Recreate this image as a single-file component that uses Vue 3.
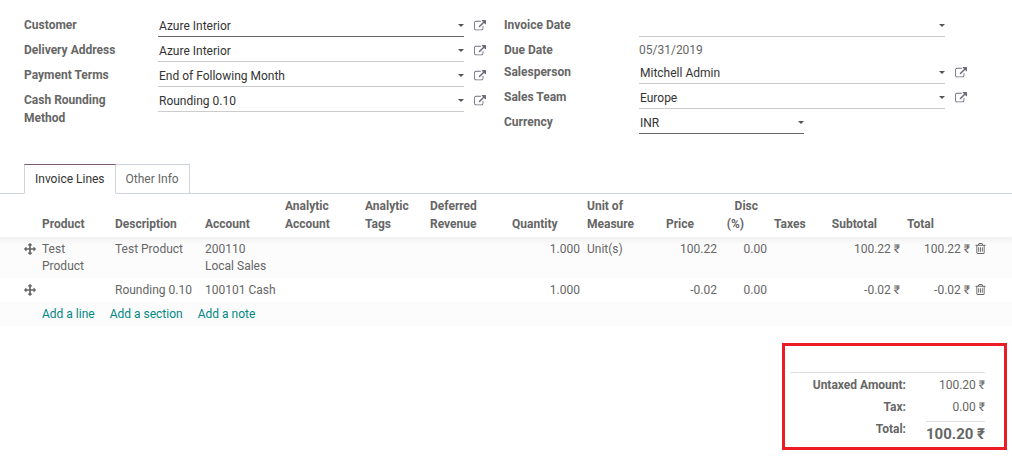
<script setup>
import { ref } from 'vue'

const leftFields = [
  { id: 'customer', label: 'Customer', value: 'Azure Interior', link: true, required: true },
  { id: 'delivery', label: 'Delivery Address', value: 'Azure Interior', link: true },
  { id: 'terms', label: 'Payment Terms', value: 'End of Following Month', link: true },
  { id: 'rounding', label: 'Cash Rounding Method', value: 'Rounding 0.10', link: true },
]
const rightFields = [
  { id: 'date', label: 'Invoice Date', value: '', kind: 'date' },
  { id: 'due', label: 'Due Date', value: '05/31/2019', kind: 'text' },
  { id: 'salesperson', label: 'Salesperson', value: 'Mitchell Admin', link: true },
  { id: 'team', label: 'Sales Team', value: 'Europe', link: true },
  { id: 'currency', label: 'Currency', value: 'INR', required: true, short: true },
]
const groups = [leftFields, rightFields]
const invoiceDate = ref('')
const activeTab = ref('Invoice Lines')
const tabs = ['Invoice Lines', 'Other Info']

const lines = [
  { product: 'Test Product', description: 'Test Product', account: '200110 Local Sales', quantity: '1.000', unit: 'Unit(s)', price: '100.22', disc: '0.00', subtotal: '100.22 ₹', total: '100.22 ₹' },
  { product: '', description: 'Rounding 0.10', account: '100101 Cash', quantity: '1.000', unit: '', price: '-0.02', disc: '0.00', subtotal: '-0.02 ₹', total: '-0.02 ₹' },
]
const columns = ['handle', 'product', 'description', 'account', 'analytic', 'tags', 'deferred', 'quantity', 'unit', 'price', 'disc', 'taxes', 'subtotal', 'total', 'remove']

const linkPath = 'M1408 928v320q0 119-84.5 203.5t-203.5 84.5h-832q-119 0-203.5-84.5t-84.5-203.5v-832q0-119 84.5-203.5t203.5-84.5h704q14 0 23 9t9 23v64q0 14-9 23t-23 9h-704q-66 0-113 47t-47 113v832q0 66 47 113t113 47h832q66 0 113-47t47-113v-320q0-14 9-23t23-9h64q14 0 23 9t9 23zm384-864v512q0 26-19 45t-45 19-45-19l-176-176-652 652q-10 10-23 10t-23-10l-114-114q-10-10-10-23t10-23l652-652-176-176q-19-19-19-45t19-45 45-19h512q26 0 45 19t19 45z'
const movePath = 'M1792 896q0 26-19 45l-256 256q-19 19-45 19t-45-19-19-45v-128h-384v384h128q26 0 45 19t19 45-19 45l-256 256q-19 19-45 19t-45-19l-256-256q-19-19-19-45t19-45 45-19h128v-384h-384v128q0 26-19 45t-45 19-45-19l-256-256q-19-19-19-45t19-45l256-256q19-19 45-19t45 19 19 45v128h384v-384h-128q-26 0-45-19t-19-45 19-45l256-256q19-19 45-19t45 19l256 256q19 19 19 45t-19 45-45 19h-128v384h384v-128q0-26 19-45t45-19 45 19l256 256q19 19 19 45z'
const trashPath = 'M704 736v576q0 14-9 23t-23 9h-64q-14 0-23-9t-9-23v-576q0-14 9-23t23-9h64q14 0 23 9t9 23zm256 0v576q0 14-9 23t-23 9h-64q-14 0-23-9t-9-23v-576q0-14 9-23t23-9h64q14 0 23 9t9 23zm256 0v576q0 14-9 23t-23 9h-64q-14 0-23-9t-9-23v-576q0-14 9-23t23-9h64q14 0 23 9t9 23zm128 724v-948h-896v948q0 22 7 40.5t14.5 27 10.5 8.5h832q3 0 10.5-8.5t14.5-27 7-40.5zm-672-1076h448l-48-117q-7-9-17-11h-317q-10 2-17 11zm928 32v64q0 14-9 23t-23 9h-96v948q0 83-47 143.5t-113 60.5h-832q-66 0-113-58.5t-47-141.5v-952h-96q-14 0-23-9t-9-23v-64q0-14 9-23t23-9h309l70-167q15-37 54-63t79-26h320q40 0 79 26t54 63l70 167h309q14 0 23 9t9 23z'
</script>

<template>
  <main class="invoice">
    <form class="groups" @submit.prevent>
      <div v-for="(fields, g) in groups" :key="g" class="group">
        <div v-for="f in fields" :key="f.id" class="field" :class="{ plain: f.kind === 'text' }">
          <label v-if="f.kind !== 'text'" class="label" :for="f.id">{{ f.label }}</label>
          <span v-else class="label">{{ f.label }}</span>
          <span v-if="f.kind === 'text'" class="static">{{ f.value }}</span>
          <div v-else class="control" :class="{ required: f.required, short: f.short }">
            <input v-if="f.kind === 'date'" :id="f.id" v-model="invoiceDate" type="text">
            <select v-else :id="f.id">
              <option>{{ f.value }}</option>
            </select>
            <svg class="caret" viewBox="0 0 6 3" aria-hidden="true"><path d="M0 0h6L3 3z" /></svg>
          </div>
          <button v-if="f.link" type="button" class="icon-button open" :aria-label="'Open ' + f.label">
            <svg class="icon" viewBox="0 0 1792 1792"><path :d="linkPath" /></svg>
          </button>
        </div>
      </div>
    </form>

    <div class="tabs" role="tablist">
      <button
        v-for="t in tabs" :key="t" type="button" role="tab" class="tab"
        :class="{ active: t === activeTab }" :aria-selected="t === activeTab" @click="activeTab = t"
      >{{ t }}</button>
    </div>

    <table class="lines">
      <colgroup>
        <col v-for="c in columns" :key="c" :class="'col-' + c">
      </colgroup>
      <thead>
        <tr>
          <th></th>
          <th>Product</th>
          <th>Description</th>
          <th>Account</th>
          <th>Analytic Account</th>
          <th>Analytic Tags</th>
          <th>Deferred Revenue</th>
          <th class="num">Quantity</th>
          <th>Unit of Measure</th>
          <th class="num">Price</th>
          <th class="num disc">Disc <span class="percent">(%)</span></th>
          <th>Taxes</th>
          <th class="num">Subtotal</th>
          <th>Total</th>
          <th></th>
        </tr>
      </thead>
      <tbody>
        <tr v-for="(l, i) in lines" :key="i">
          <td class="handle"><svg class="icon" viewBox="0 0 1792 1792"><path :d="movePath" /></svg></td>
          <td>{{ l.product }}</td>
          <td>{{ l.description }}</td>
          <td>{{ l.account }}</td>
          <td></td>
          <td></td>
          <td></td>
          <td class="num">{{ l.quantity }}</td>
          <td>{{ l.unit }}</td>
          <td class="num">{{ l.price }}</td>
          <td class="num">{{ l.disc }}</td>
          <td></td>
          <td class="num">{{ l.subtotal }}</td>
          <td class="num">{{ l.total }}</td>
          <td class="remove">
            <button type="button" class="icon-button" aria-label="Delete line">
              <svg class="icon trash" viewBox="128 128 1536 1536"><path :d="trashPath" /></svg>
            </button>
          </td>
        </tr>
        <tr>
          <td></td>
          <td colspan="14">
            <div class="adders">
              <a href="#">Add a line</a>
              <a href="#">Add a section</a>
              <a href="#">Add a note</a>
            </div>
          </td>
        </tr>
      </tbody>
    </table>

    <section class="summary">
      <dl class="totals">
        <dt>Untaxed Amount:</dt>
        <dd>100.20 ₹</dd>
        <dt>Tax:</dt>
        <dd>0.00 ₹</dd>
        <dt>Total:</dt>
        <dd class="grand">100.20 ₹</dd>
      </dl>
    </section>
  </main>
</template>

<style>
body {
  background: #fff;
}
</style>

<style scoped>
.invoice {
  padding-top: 12px;
  font-family: Roboto, "Noto Sans", sans-serif;
  font-size: 12px;
  line-height: 18px;
  color: #666;
}
button, input, select {
  font: inherit;
  color: inherit;
}
.groups {
  display: grid;
  grid-template-columns: 1fr 1fr;
  padding: 0 28px 0 24px;
}
.field {
  display: grid;
  grid-template-columns: 134px 1fr 40px;
  align-items: start;
  min-height: 25px;
}
.group:last-child .field {
  grid-template-columns: 135px 1fr 39px;
}
.group .field.plain {
  min-height: 21px;
}
.label {
  padding: 4px 24px 0 0;
  font-weight: 700;
}
.static {
  padding-top: 4px;
}
.control {
  position: relative;
  height: 24px;
  border-bottom: 1px solid #ccc;
  color: #333;
}
.control.required {
  border-bottom-color: #666;
}
.control.short {
  width: 165px;
}
.control input,
.control select {
  display: block;
  box-sizing: border-box;
  width: 100%;
  height: 24px;
  padding: 4px 16px 0 1px;
  border: 0;
  background: none;
  appearance: none;
  outline: none;
}
.caret {
  position: absolute;
  right: 0;
  top: 12px;
  width: 6px;
  height: 3px;
  fill: #555;
  pointer-events: none;
}
.icon-button {
  display: block;
  padding: 0;
  border: 0;
  background: none;
}
.open {
  margin: 8px 0 0 10px;
  color: #6c6c80;
}
.icon {
  display: block;
  width: 12px;
  height: 12px;
  fill: currentColor;
}
.icon.trash {
  width: 11px;
  height: 11px;
}
.tabs {
  display: flex;
  margin-top: 30px;
  padding-left: 24px;
  border-bottom: 1px solid #ced4da;
}
.tab {
  height: 30px;
  margin-bottom: -1px;
  padding: 0 10px;
  border: 1px solid #ced4da;
  background: #fff;
}
.tab + .tab {
  border-left: 0;
}
.tab.active {
  border-top-color: #7c5a6f;
  border-bottom-color: #fff;
  color: #333;
}
.lines {
  width: 100%;
  table-layout: fixed;
  border-collapse: collapse;
}
.col-handle { width: 38px; }
.col-product { width: 73px; }
.col-description { width: 90px; }
.col-account { width: 80px; }
.col-analytic { width: 80px; }
.col-tags { width: 65px; }
.col-deferred { width: 82px; }
.col-quantity { width: 75px; }
.col-unit { width: 78px; }
.col-price { width: 59px; }
.col-disc { width: 50px; }
.col-taxes { width: 53px; }
.col-subtotal { width: 80px; }
.col-total { width: 70px; }
.lines th {
  padding: 3px 4px 4px;
  text-align: left;
  vertical-align: bottom;
}
.lines td {
  padding: 4px 4px 3px;
  line-height: 17px;
  vertical-align: top;
}
.lines .num {
  padding-right: 3px;
  text-align: right;
}
.lines th.num {
  padding-right: 26px;
}
.lines th.disc {
  padding-right: 12px;
  padding-left: 0;
}
.percent {
  margin-right: 14px;
}
.lines tbody tr:nth-child(odd) {
  background: #fcfcfc;
}
.lines tbody tr:first-child {
  background: linear-gradient(#f1f1f1, #fcfcfc 8px);
}
.lines .handle {
  padding: 6px 0 0 24px;
}
.lines .remove {
  padding: 6px 0 0 2px;
}
.adders {
  display: flex;
  gap: 15px;
}
.adders a {
  color: #008784;
  text-decoration: none;
}
.summary {
  width: 195px;
  margin: 17px 5px 6px auto;
  padding: 26px 19px 3px 5px;
  border: 3px solid #ed1c24;
}
.totals {
  display: grid;
  grid-template-columns: 1fr 79px;
  margin: 0;
  border-top: 1px solid #ddd;
}
.totals dt,
.totals dd {
  margin: 0;
  padding: 3px 0 1px;
  text-align: right;
}
.totals dt {
  font-weight: 700;
}
.totals .grand {
  justify-self: end;
  margin-top: 4px;
  border-top: 1px solid #ddd;
  font-size: 15px;
  font-weight: 700;
}
</style>
